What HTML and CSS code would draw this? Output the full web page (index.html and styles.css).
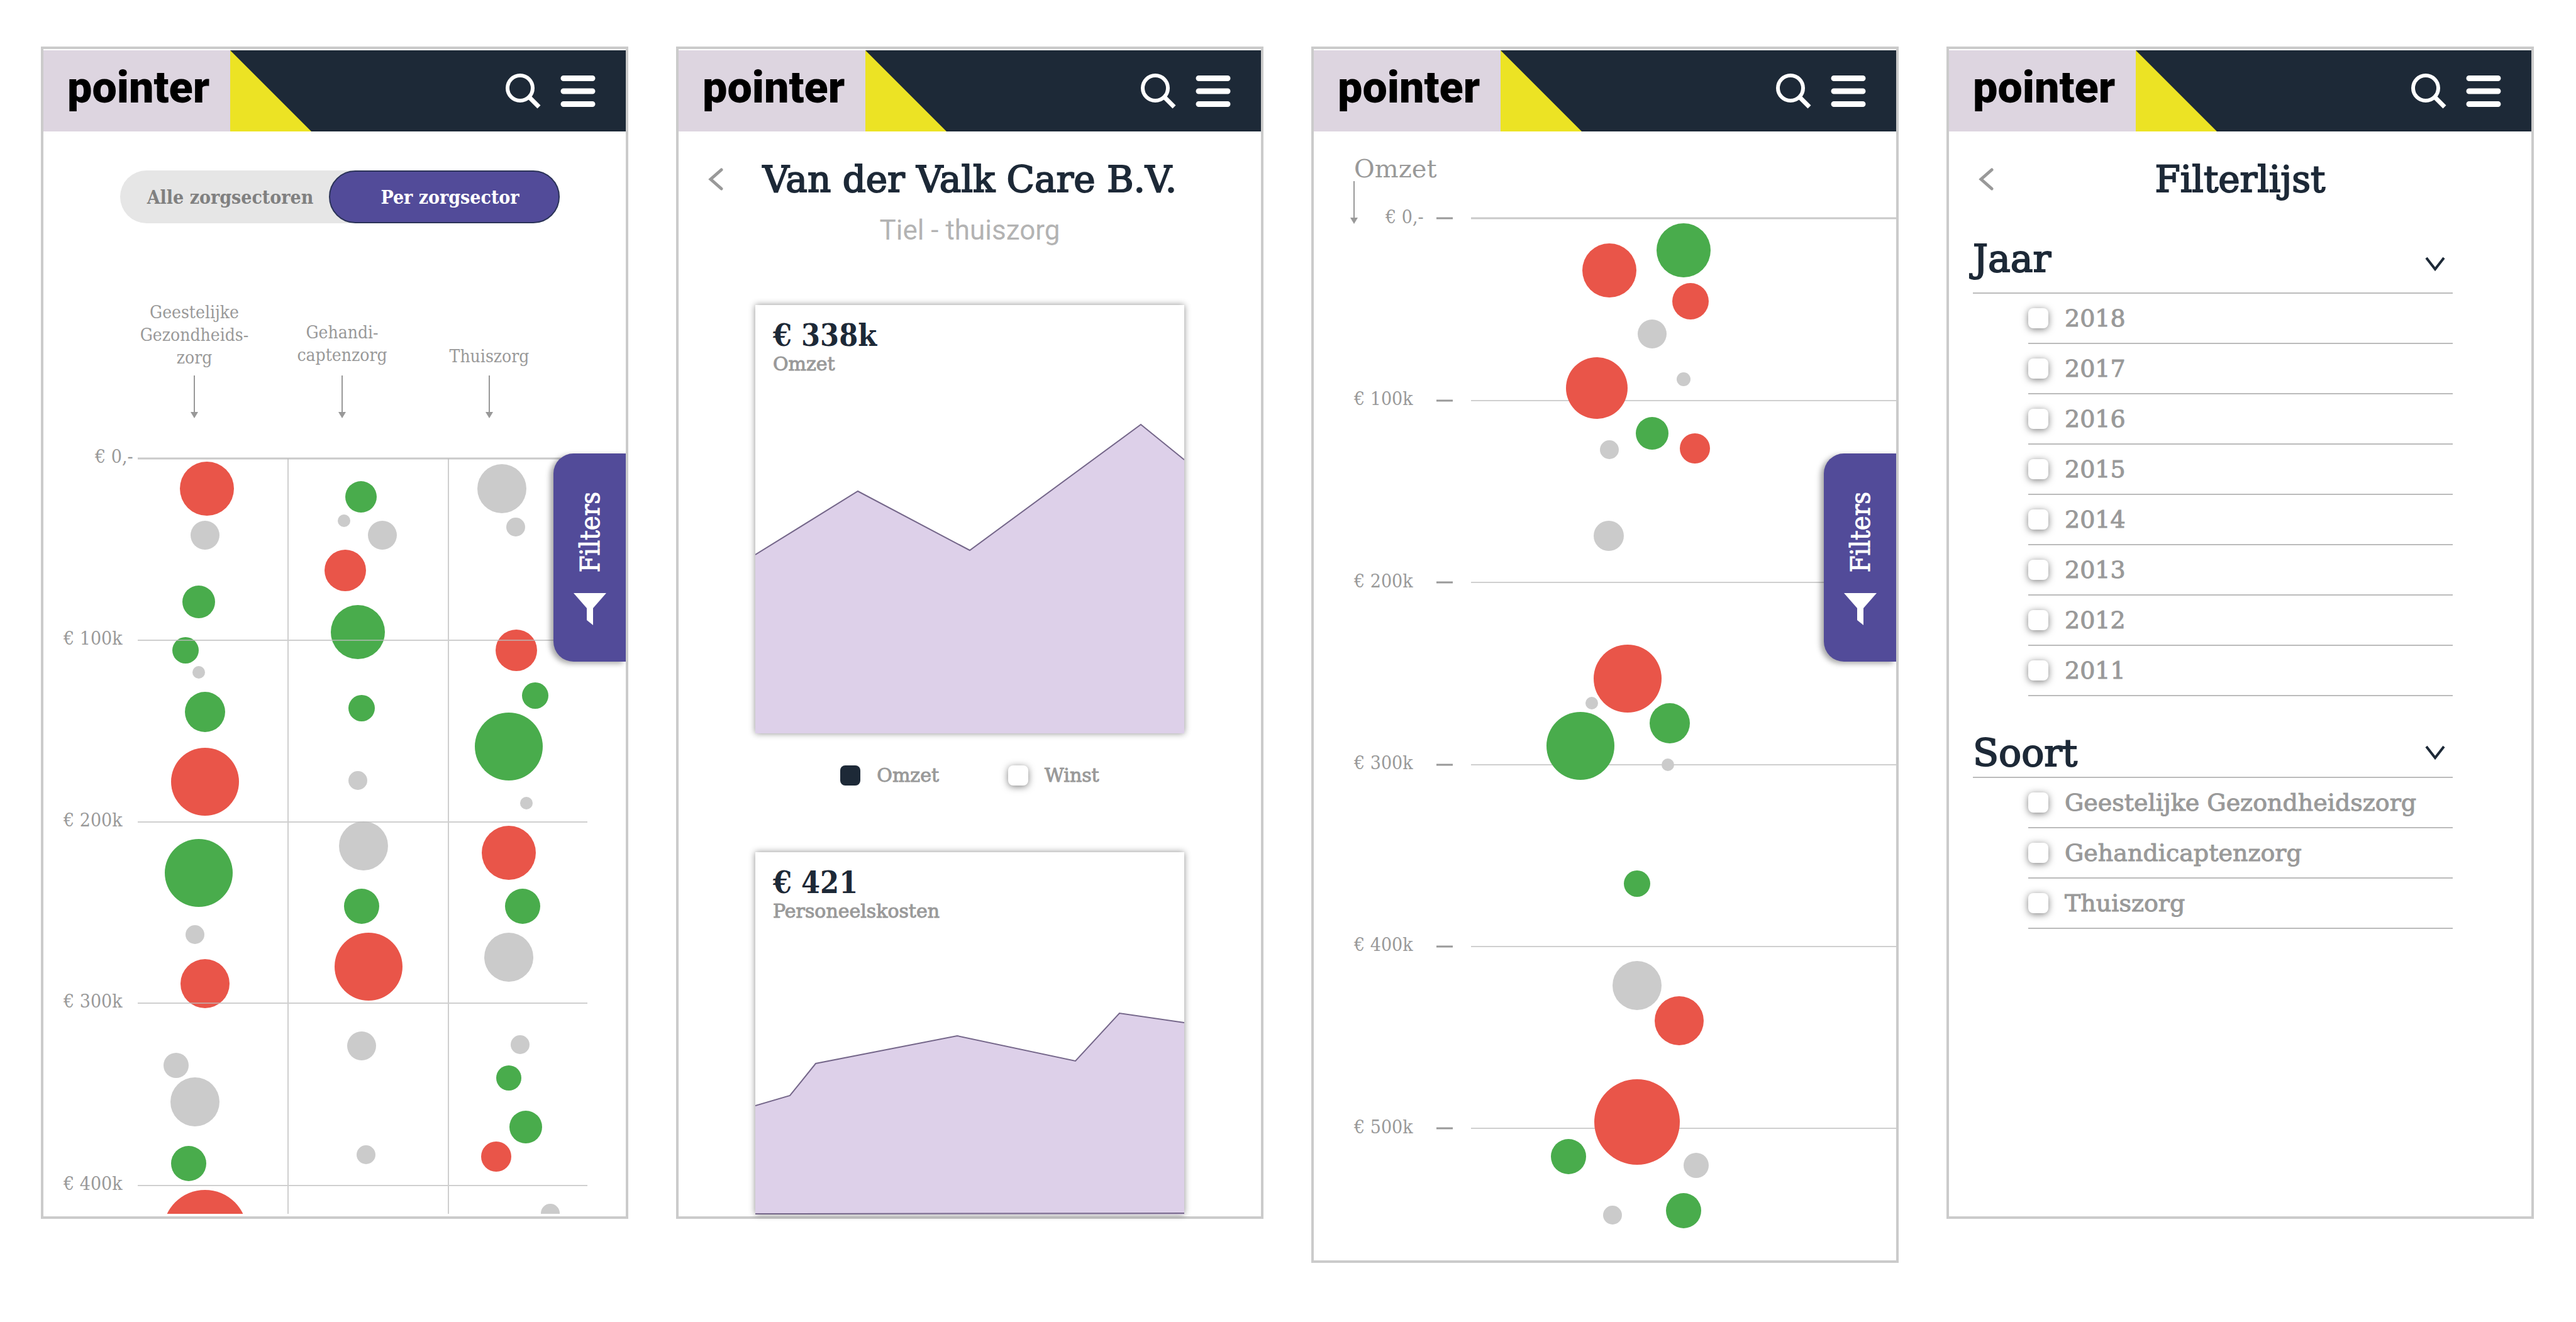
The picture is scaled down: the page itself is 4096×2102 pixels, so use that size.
FILE: index.html
```html
<!DOCTYPE html>
<html lang="nl">
<head>
<meta charset="utf-8">
<title>Pointer – zorgbedrijven</title>
<link rel="stylesheet" href="styles.css">
</head>
<body>
<svg class="sprite" aria-hidden="true">
  <symbol id="search" viewBox="0 0 56 56"><circle cx="23" cy="23" r="20" fill="none" stroke="#fff" stroke-width="6"/><path d="M37 37L53 53" stroke="#fff" stroke-width="7"/></symbol>
  <symbol id="menu" viewBox="0 0 56 50"><path d="M5 4.500H51M5 25H51M5 45.500H51" stroke="#fff" stroke-width="9" stroke-linecap="round"/></symbol>
  <symbol id="back" viewBox="0 0 24 36"><path d="M21 3L4 18L21 33" fill="none" stroke="#999" stroke-width="5" stroke-linecap="round"/></symbol>
  <symbol id="down" viewBox="0 0 32 24"><path d="M2 2L16 20L30 2" fill="none" stroke="#1d2937" stroke-width="4"/></symbol>
  <symbol id="funnel" viewBox="0 0 52 51"><path d="M0 0H52L31 24V51L21 43V24Z" fill="#fff"/></symbol>
  <symbol id="arrow" viewBox="0 0 12 68"><path d="M6 0V60" stroke="#999" stroke-width="2"/><path d="M0 58H12L6 68Z" fill="#999"/></symbol>
</svg>

<main class="screens">

  <article class="phone">
    <header class="topbar">
      <a class="logo" href="#">pointer</a>
      <span class="corner"></span>
      <nav class="actions">
        <button aria-label="Zoeken"><svg width="56" height="56"><use href="#search"/></svg></button>
        <button aria-label="Menu"><svg width="56" height="50"><use href="#menu"/></svg></button>
      </nav>
    </header>
    <div class="switch">
      <button>Alle zorgsectoren</button>
      <button class="active">Per zorgsector</button>
    </div>
    <svg class="chart" viewBox="69 355 926 1575" role="img" aria-label="Omzet per zorgsector">
      <g class="heads">
        <text x="309" y="506">Geestelijke</text>
        <text x="309" y="542">Gezondheids-</text>
        <text x="309" y="578">zorg</text>
        <text x="544" y="538">Gehandi-</text>
        <text x="544" y="574">captenzorg</text>
        <text x="778" y="576">Thuiszorg</text>
      </g>
      <use href="#arrow" x="303" y="597" width="12" height="68"/>
      <use href="#arrow" x="538" y="597" width="12" height="68"/>
      <use href="#arrow" x="772" y="597" width="12" height="68"/>
      <g class="loss">
        <circle cx="329" cy="777" r="43"/><circle cx="326" cy="1243" r="54"/><circle cx="326" cy="1564" r="39"/><circle cx="326" cy="1959" r="67"/>
        <circle cx="549" cy="907" r="33"/><circle cx="586" cy="1537" r="54"/>
        <circle cx="821" cy="1034" r="33"/><circle cx="809" cy="1356" r="43"/><circle cx="789" cy="1839" r="24"/>
      </g>
      <g class="profit">
        <circle cx="316" cy="957" r="26"/><circle cx="295" cy="1034" r="21"/><circle cx="326" cy="1132" r="32"/><circle cx="316" cy="1388" r="54"/><circle cx="300" cy="1850" r="28"/>
        <circle cx="574" cy="790" r="25"/><circle cx="569" cy="1005" r="43"/><circle cx="575" cy="1126" r="21"/><circle cx="575" cy="1441" r="28"/>
        <circle cx="851" cy="1106" r="21"/><circle cx="809" cy="1187" r="54"/><circle cx="831" cy="1441" r="28"/><circle cx="809" cy="1714" r="20"/><circle cx="836" cy="1792" r="26"/>
      </g>
      <g class="neutral">
        <circle cx="326" cy="851" r="23"/><circle cx="316" cy="1069" r="10"/><circle cx="310" cy="1486" r="15"/><circle cx="280" cy="1694" r="20"/><circle cx="310" cy="1752" r="39"/>
        <circle cx="547" cy="828" r="10"/><circle cx="608" cy="851" r="23"/><circle cx="569" cy="1241" r="15"/><circle cx="578" cy="1345" r="39"/><circle cx="575" cy="1663" r="23"/><circle cx="582" cy="1836" r="15"/>
        <circle cx="798" cy="777" r="39"/><circle cx="820" cy="838" r="15"/><circle cx="837" cy="1277" r="10"/><circle cx="809" cy="1522" r="39"/><circle cx="827" cy="1661" r="15"/><circle cx="875" cy="1929" r="15"/>
      </g>
      <path class="rule strong" d="M219 729H934"/>
      <path class="rule" d="M219 1018H934M219 1307H934M219 1595H934M219 1885H934M458 729V1930M713 729V1930"/>
      <g class="axis">
        <text x="151" y="736">€ 0,-</text>
        <text x="101" y="1025">€ 100k</text>
        <text x="101" y="1314">€ 200k</text>
        <text x="101" y="1602">€ 300k</text>
        <text x="101" y="1892">€ 400k</text>
      </g>
    </svg>
    <button class="filter-tab"><span>Filters</span><svg width="52" height="51"><use href="#funnel"/></svg></button>
  </article>

  <article class="phone">
    <header class="topbar">
      <a class="logo" href="#">pointer</a>
      <span class="corner"></span>
      <nav class="actions">
        <button aria-label="Zoeken"><svg width="56" height="56"><use href="#search"/></svg></button>
        <button aria-label="Menu"><svg width="56" height="50"><use href="#menu"/></svg></button>
      </nav>
    </header>
    <div class="title-row">
      <a href="#" aria-label="Terug"><svg width="24" height="36"><use href="#back"/></svg></a>
      <h1>Van der Valk Care B.V.</h1>
    </div>
    <p class="subtitle">Tiel - thuiszorg</p>
    <section class="card">
      <h2>€ 338k</h2>
      <p>Omzet</p>
      <svg class="area" viewBox="0 112 682 569"><path class="fill" d="M0 397L163 296L341 390L613 190L682 246V681H0Z"/><path class="edge" d="M0 397L163 296L341 390L613 190L682 246"/></svg>
    </section>
    <div class="legend">
      <label><input type="checkbox" checked>Omzet</label>
      <label><input type="checkbox">Winst</label>
    </div>
    <section class="card">
      <h2>€ 421</h2>
      <p>Personeelskosten</p>
      <svg class="area" viewBox="0 112 682 464"><path class="fill" d="M0 403L55 387L96 336L321 292L509 332L579 256L682 271V576H0Z"/><path class="edge" d="M0 403L55 387L96 336L321 292L509 332L579 256L682 271M0 575L682 574"/></svg>
    </section>
  </article>

  <article class="phone">
    <header class="topbar">
      <a class="logo" href="#">pointer</a>
      <span class="corner"></span>
      <nav class="actions">
        <button aria-label="Zoeken"><svg width="56" height="56"><use href="#search"/></svg></button>
        <button aria-label="Menu"><svg width="56" height="50"><use href="#menu"/></svg></button>
      </nav>
    </header>
    <svg class="chart" viewBox="2089 209 926 1795" role="img" aria-label="Omzet van alle zorgsectoren">
      <text class="axis-title" x="2153" y="282">Omzet</text>
      <use href="#arrow" x="2147" y="288" width="12" height="68"/>
      <path class="rule strong" d="M2339 347H3015"/>
      <path class="rule" d="M2339 637H3015M2339 926H3015M2339 1216H3015M2339 1505H3015M2339 1794H3015"/>
      <path class="tick" d="M2284 347H2310M2284 637H2310M2284 926H2310M2284 1216H2310M2284 1505H2310M2284 1794H2310"/>
      <g class="axis">
        <text x="2203" y="355">€ 0,-</text>
        <text x="2153" y="644">€ 100k</text>
        <text x="2153" y="934">€ 200k</text>
        <text x="2153" y="1223">€ 300k</text>
        <text x="2153" y="1512">€ 400k</text>
        <text x="2153" y="1802">€ 500k</text>
      </g>
      <g class="loss">
        <circle cx="2559" cy="430" r="43"/><circle cx="2688" cy="479" r="29"/><circle cx="2539" cy="617" r="49"/><circle cx="2695" cy="713" r="24"/><circle cx="2588" cy="1079" r="54"/><circle cx="2670" cy="1623" r="39"/><circle cx="2603" cy="1784" r="68"/>
      </g>
      <g class="profit">
        <circle cx="2677" cy="398" r="43"/><circle cx="2627" cy="689" r="26"/><circle cx="2513" cy="1186" r="54"/><circle cx="2655" cy="1150" r="32"/><circle cx="2603" cy="1405" r="21"/><circle cx="2494" cy="1839" r="28"/><circle cx="2677" cy="1925" r="28"/>
      </g>
      <g class="neutral">
        <circle cx="2627" cy="531" r="23"/><circle cx="2677" cy="603" r="11"/><circle cx="2559" cy="715" r="15"/><circle cx="2558" cy="852" r="24"/><circle cx="2531" cy="1118" r="10"/><circle cx="2652" cy="1216" r="10"/><circle cx="2603" cy="1567" r="39"/><circle cx="2697" cy="1853" r="20"/><circle cx="2564" cy="1932" r="15"/>
      </g>
    </svg>
    <button class="filter-tab"><span>Filters</span><svg width="52" height="51"><use href="#funnel"/></svg></button>
  </article>

  <article class="phone">
    <header class="topbar">
      <a class="logo" href="#">pointer</a>
      <span class="corner"></span>
      <nav class="actions">
        <button aria-label="Zoeken"><svg width="56" height="56"><use href="#search"/></svg></button>
        <button aria-label="Menu"><svg width="56" height="50"><use href="#menu"/></svg></button>
      </nav>
    </header>
    <div class="title-row">
      <a href="#" aria-label="Terug"><svg width="24" height="36"><use href="#back"/></svg></a>
      <h1>Filterlijst</h1>
    </div>
    <section class="group years">
      <button class="group-head">Jaar<svg width="32" height="24"><use href="#down"/></svg></button>
      <ul>
        <li><label><input type="checkbox">2018</label></li>
        <li><label><input type="checkbox">2017</label></li>
        <li><label><input type="checkbox">2016</label></li>
        <li><label><input type="checkbox">2015</label></li>
        <li><label><input type="checkbox">2014</label></li>
        <li><label><input type="checkbox">2013</label></li>
        <li><label><input type="checkbox">2012</label></li>
        <li><label><input type="checkbox">2011</label></li>
      </ul>
    </section>
    <section class="group">
      <button class="group-head">Soort<svg width="32" height="24"><use href="#down"/></svg></button>
      <ul>
        <li><label><input type="checkbox">Geestelijke Gezondheidszorg</label></li>
        <li><label><input type="checkbox">Gehandicaptenzorg</label></li>
        <li><label><input type="checkbox">Thuiszorg</label></li>
      </ul>
    </section>
  </article>

</main>
</body>
</html>
```
FILE: styles.css
```css
:root {
  --navy: #1d2937;
  --purple: #524b99;
  --grey: #999;
  --line: #cbcbcb;
  --slab: "DejaVu Serif", serif;
  --slab-narrow: "DejaVu Serif Condensed", "DejaVu Serif", serif;
}
* { box-sizing: border-box; margin: 0; padding: 0; }
body {
  background: #fff;
  color: var(--navy);
  font-family: var(--slab);
  padding: 74px 67px 74px 65px;
}
button { border: 0; background: none; font: inherit; color: inherit; cursor: pointer; }
a { color: inherit; text-decoration: none; }
svg { display: block; }
.sprite { position: absolute; width: 0; height: 0; }

.screens {
  display: grid;
  grid-template-columns: repeat(4, minmax(0, 1fr));
  gap: 76px;
  align-items: start;
}
.phone {
  position: relative;
  border: 4px solid var(--line);
  padding-top: 2px;
  aspect-ratio: 467 / 932;
}

/* top bar */
.topbar { display: flex; height: 129px; background: var(--navy); }
.logo {
  width: 297px;
  padding-left: 38px;
  background: #ddd5e0;
  color: #000;
  font: 900 70px/118px Roboto, sans-serif;
}
.corner { width: 129px; background: #ece324; clip-path: polygon(0 0, 100% 100%, 0 100%); }
.actions { display: flex; align-items: center; gap: 31px; margin-left: auto; padding-right: 48px; }

/* sector switch */
.switch {
  display: flex;
  height: 84px;
  margin: 62px 105px 0 122px;
  border-radius: 42px;
  background: #e6e6e6;
  font-family: var(--slab-narrow);
  font-size: 30px;
  font-weight: bold;
  color: #808080;
}
.switch button { flex: 1; padding-left: 18px; }
.switch .active {
  flex: none;
  width: 367px;
  border: 2px solid #2b3358;
  border-radius: 42px;
  background: var(--purple);
  color: #fff;
}

/* bubble charts */
.chart { width: 100%; height: auto; font-family: var(--slab-narrow); }
.chart text { fill: var(--grey); font-size: 28px; }
.chart .axis text { font-size: 30px; }
.chart .axis-title { font-family: var(--slab); font-size: 40px; }
.heads { text-anchor: middle; }
.loss { fill: #e95549; }
.profit { fill: #49ac4c; }
.neutral { fill: #cbcbcb; }
.rule { fill: none; stroke: #bbb; stroke-width: 2; stroke-opacity: .7; }
.rule.strong { stroke-width: 3; stroke-opacity: .8; }
.tick { stroke: var(--grey); stroke-width: 3; }

.filter-tab {
  position: absolute;
  top: 643px;
  right: 0;
  display: flex;
  flex-direction: column;
  align-items: center;
  gap: 33px;
  width: 115px;
  height: 331px;
  padding-top: 61px;
  border-radius: 32px 0 0 32px;
  background: var(--purple);
  box-shadow: -5px 3px 8px rgba(0, 0, 0, .35);
  clip-path: inset(-16px 0 -16px -24px);
  color: #fff;
  font-family: var(--slab-narrow);
  font-size: 43px;
  -webkit-text-stroke: 1px;
}
.filter-tab span { writing-mode: vertical-rl; transform: rotate(180deg); line-height: 52px; }

/* titles */
.title-row {
  display: grid;
  grid-template-columns: 24px 1fr 24px;
  align-items: center;
  margin-top: 40px;
  padding: 0 47px;
}
h1 {
  font-size: 58px;
  font-weight: normal;
  line-height: 72px;
  text-align: center;
  -webkit-text-stroke: 2px;
}
.subtitle {
  margin-top: 17px;
  color: #b3b3b3;
  font: 400 44px/56px Roboto, sans-serif;
  text-align: center;
}

/* company cards */
.card { margin: 0 122px; padding-top: 20px; box-shadow: 0 0 10px rgba(0, 0, 0, .45); }
.subtitle + .card { margin-top: 91px; }
.card h2 { padding-left: 28px; font-family: var(--slab-narrow); font-size: 48px; line-height: 56px; }
.card p { padding-left: 28px; color: var(--grey); font-size: 30px; line-height: 36px; -webkit-text-stroke: 1px; }
.area { width: 100%; height: auto; }
.fill { fill: #ddd0e9; }
.edge { fill: none; stroke: #75678a; stroke-width: 2; }
.legend {
  display: flex;
  justify-content: center;
  gap: 110px;
  margin: 49px 0 104px;
  color: var(--grey);
  font-size: 30px;
  line-height: 36px;
  -webkit-text-stroke: 1px;
}
label { display: flex; align-items: center; gap: 26px; }
input {
  appearance: none;
  width: 32px;
  height: 32px;
  border-radius: 8px;
  background: #fff;
  box-shadow: 0 2px 12px rgba(0, 0, 0, .5);
}
input:checked { background: var(--navy); box-shadow: none; }

/* filter list */
.group { margin: 54px 125px 0 38px; }
.group-head {
  display: flex;
  align-items: center;
  justify-content: space-between;
  width: 100%;
  padding: 0 12px 2px 0;
  border-bottom: 2px solid #bbb;
  font-size: 60px;
  line-height: 72px;
  -webkit-text-stroke: 2px;
}
.years .group-head { align-items: baseline; padding-bottom: 18px; }
ul { margin-left: 88px; list-style: none; }
li {
  border-bottom: 2px solid #bbb;
  color: var(--grey);
  font-size: 38px;
  line-height: 78px;
  -webkit-text-stroke: 1px;
}
```
